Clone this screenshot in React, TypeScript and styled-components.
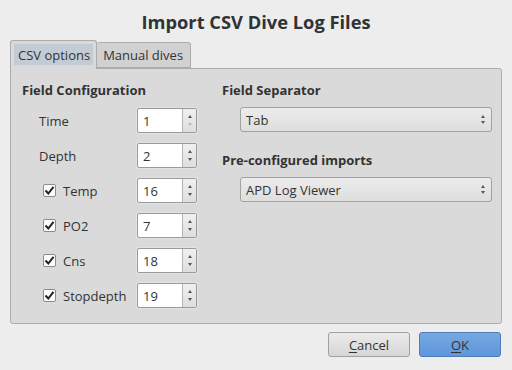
import React from "react";
import styled, { createGlobalStyle } from "styled-components";

const Global = createGlobalStyle`
  html, body { margin: 0; padding: 0; background: #ededed; }
  * { box-sizing: border-box; }
`;

const Dialog = styled.div`
  width: 512px;
  height: 370px;
  background: #ededed;
  font-family: "Open Sans", "Noto Sans", sans-serif;
  color: #333;
  display: flex;
  flex-direction: column;
  overflow: hidden;
`;

const Title = styled.div`
  height: 40px;
  display: flex;
  align-items: center;
  justify-content: center;
  padding-top: 2px;
  font-size: 18.3px;
  font-weight: 700;
  color: #2f3335;
`;

const TabBar = styled.div`
  display: flex;
  align-items: flex-end;
  height: 28px;
  padding-left: 10px;
  position: relative;
  z-index: 1;
`;

const Tab = styled.div<{ $active?: boolean }>`
  height: ${(p) => (p.$active ? 29 : 26)}px;
  padding: ${(p) => (p.$active ? "3px 3px 0 3px" : "0 7px 0 6px")};
  margin-bottom: ${(p) => (p.$active ? -1 : 0)}px;
  background: ${(p) => (p.$active ? "#dadada" : "#d1d1d1")};
  border: 1px solid #acacac;
  border-bottom: ${(p) => (p.$active ? "none" : "1px solid #acacac")};
  border-left: ${(p) => (p.$active ? "1px solid #acacac" : "none")};
  border-radius: 3px 3px 0 0;
  font-size: 13px;
  color: #333;
  display: flex;
  align-items: ${(p) => (p.$active ? "flex-start" : "center")};
`;

const TabLabel = styled.span`
  background: #c3ccd5;
  height: 21px;
  padding: 0 3px 0 4px;
  display: flex;
  align-items: center;
`;

const Panel = styled.div`
  margin: 0 10px;
  height: 256px;
  background: #dadada;
  border: 1px solid #acacac;
  border-radius: 0 3px 3px 3px;
  padding: 11px 9px 0 11px;
  display: flex;
`;

const LeftCol = styled.div`
  width: 200px;
  display: flex;
  flex-direction: column;
`;

const RightCol = styled.div`
  flex: 1;
  display: flex;
  flex-direction: column;
`;

const Heading = styled.div<{ $gapTop?: number }>`
  height: 20px;
  margin-top: ${(p) => p.$gapTop ?? 0}px;
  display: flex;
  align-items: center;
  font-size: 13px;
  font-weight: 700;
  color: #333;
`;

const Rows = styled.div`
  margin-top: 3px;
  display: flex;
  flex-direction: column;
`;

const Row = styled.div`
  height: 35px;
  display: flex;
  align-items: center;
  padding-left: 17px;
`;

const LabelArea = styled.div`
  width: 97px;
  display: flex;
  align-items: center;
  font-size: 13px;
  color: #333;
`;

const Check = styled.span`
  width: 13px;
  height: 13px;
  margin-left: 4px;
  margin-right: 7px;
  background: #fdfdfd;
  border: 1px solid #8c8c8c;
  border-radius: 2px;
  display: flex;
  align-items: center;
  justify-content: center;
`;

const SpinHalo = styled.div`
  padding: 1px;
  background: #e3e3e3;
  border-radius: 3px;
`;

const Spin = styled.div`
  width: 60px;
  height: 25px;
  display: flex;
  border: 1px solid #9a9a9a;
  border-radius: 2px;
  background: #fff;
  overflow: hidden;
`;

const SpinValue = styled.div`
  flex: 1;
  display: flex;
  align-items: center;
  padding-left: 5px;
  font-size: 13px;
  color: #333;
`;

const SpinButtons = styled.div`
  width: 14px;
  border-left: 1px solid #b4b4b4;
  background: linear-gradient(#f0f0f0, #dedede);
  display: flex;
  flex-direction: column;
  align-items: center;
  justify-content: center;
  gap: 5px;
`;

const Arrow = styled.span<{ $down?: boolean; $disabled?: boolean }>`
  width: 0;
  height: 0;
  border-left: 2.5px solid transparent;
  border-right: 2.5px solid transparent;
  ${(p) =>
    p.$down
      ? `border-top: 3px solid ${p.$disabled ? "#b8b8b8" : "#555"};`
      : `border-bottom: 3px solid ${p.$disabled ? "#b8b8b8" : "#555"};`}
`;

const Combo = styled.div`
  margin-top: 7px;
  margin-left: 18px;
  height: 25px;
  border: 1px solid #a2a2a2;
  border-radius: 3px;
  background: linear-gradient(#ececec, #dedede);
  display: flex;
  align-items: center;
  justify-content: space-between;
  padding: 0 6px 0 5px;
  font-size: 13px;
  color: #333;
`;

const ComboArrows = styled.div`
  display: flex;
  flex-direction: column;
  gap: 3px;
  align-items: center;
`;

const Footer = styled.div`
  display: flex;
  justify-content: flex-end;
  gap: 9px;
  padding: 8px 11px 0 0;
`;

const Button = styled.div<{ $primary?: boolean }>`
  width: 82px;
  height: 25px;
  border-radius: 3px;
  border: 1px solid ${(p) => (p.$primary ? "#4d7cb8" : "#a0a0a0")};
  background: ${(p) =>
    p.$primary
      ? "linear-gradient(#76a8e2, #5f95da)"
      : "linear-gradient(#ebebeb, #d6d6d6)"};
  display: flex;
  align-items: center;
  justify-content: center;
  font-size: 13px;
  color: #333;
  u { text-decoration: underline; text-underline-offset: 2px; }
`;

type Field = { label: string; value: number; checkbox?: boolean; minReached?: boolean };

const fields: Field[] = [
  { label: "Time", value: 1, minReached: true },
  { label: "Depth", value: 2 },
  { label: "Temp", value: 16, checkbox: true },
  { label: "PO2", value: 7, checkbox: true },
  { label: "Cns", value: 18, checkbox: true },
  { label: "Stopdepth", value: 19, checkbox: true },
];

const CheckMark = () => (
  <svg width="11" height="11" viewBox="0 0 11 11">
    <path d="M1.5 5.5 L4.3 8.5 L9.5 1.8" fill="none" stroke="#222" strokeWidth="2" />
  </svg>
);

export default function App() {
  return (
    <>
      <Global />
      <Dialog>
        <Title>Import CSV Dive Log Files</Title>
        <TabBar>
          <Tab $active>
            <TabLabel>CSV options</TabLabel>
          </Tab>
          <Tab>Manual dives</Tab>
        </TabBar>
        <Panel>
          <LeftCol>
            <Heading>Field Configuration</Heading>
            <Rows>
              {fields.map((f) => (
                <Row key={f.label}>
                  <LabelArea>
                    {f.checkbox && (
                      <Check>
                        <CheckMark />
                      </Check>
                    )}
                    {f.label}
                  </LabelArea>
                  <SpinHalo>
                    <Spin>
                      <SpinValue>{f.value}</SpinValue>
                      <SpinButtons>
                        <Arrow />
                        <Arrow $down $disabled={f.minReached} />
                      </SpinButtons>
                    </Spin>
                  </SpinHalo>
                </Row>
              ))}
            </Rows>
          </LeftCol>
          <RightCol>
            <Heading>Field Separator</Heading>
            <Combo>
              Tab
              <ComboArrows>
                <Arrow />
                <Arrow $down />
              </ComboArrows>
            </Combo>
            <Heading $gapTop={18}>Pre-configured imports</Heading>
            <Combo>
              APD Log Viewer
              <ComboArrows>
                <Arrow />
                <Arrow $down />
              </ComboArrows>
            </Combo>
          </RightCol>
        </Panel>
        <Footer>
          <Button>
            <span><u>C</u>ancel</span>
          </Button>
          <Button $primary>
            <span><u>O</u>K</span>
          </Button>
        </Footer>
      </Dialog>
    </>
  );
}
